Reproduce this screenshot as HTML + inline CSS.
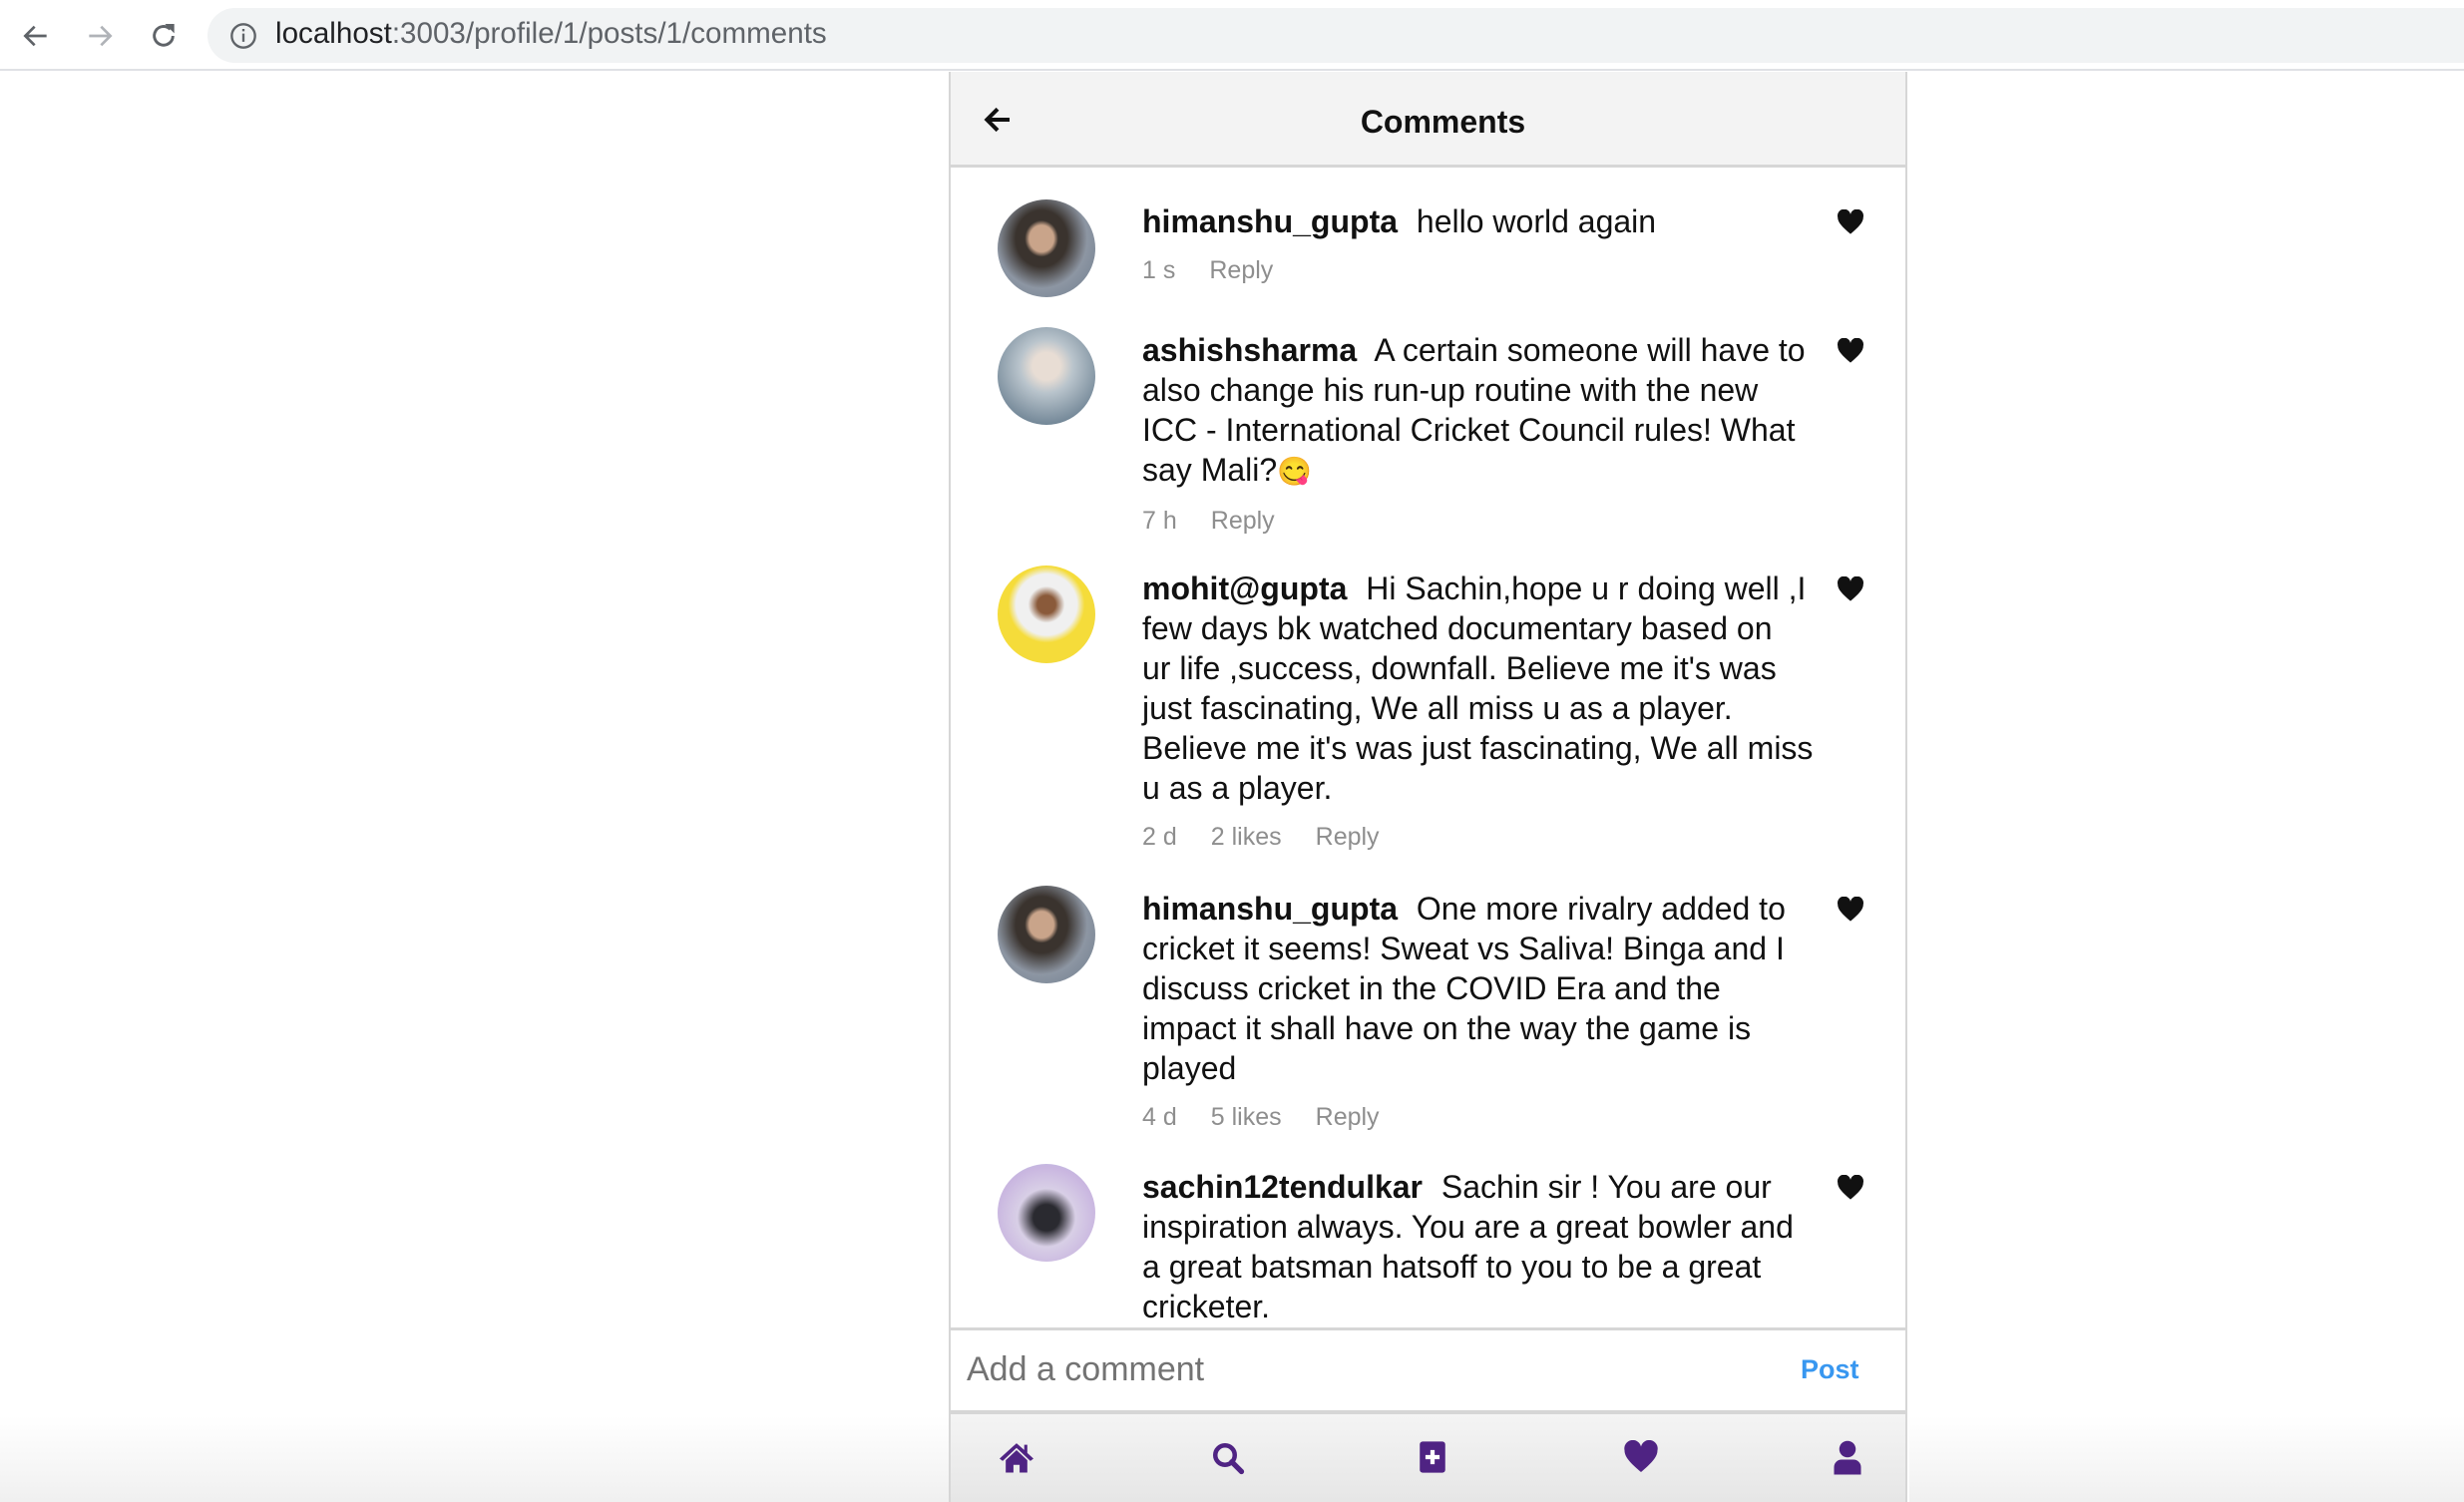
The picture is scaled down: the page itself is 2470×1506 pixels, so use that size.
<!DOCTYPE html>
<html><head><meta charset="utf-8"><style>
*{margin:0;padding:0;box-sizing:border-box}
body{width:2470px;height:1506px;overflow:hidden;background:#fff;font-family:"Liberation Sans",Helvetica,Arial,sans-serif;position:relative}
.bar{position:absolute;left:0;top:0;width:2470px;height:71px;background:#fff;border-bottom:2px solid #dfe1e5}
.pill{position:absolute;left:208px;top:8px;width:2300px;height:55px;border-radius:28px;background:#f1f3f4}
.url{position:absolute;left:276px;top:17px;font-size:29.6px;color:#5f6368}
.url b{font-weight:normal;color:#202124}
.panel{position:absolute;left:951px;top:72px;width:961px;height:1434px;border-left:2px solid #d6d6d6;border-right:2px solid #d6d6d6;background:#fff}
.hdr{position:absolute;left:0;top:0;width:100%;height:96px;background:#f3f3f3;border-bottom:3px solid #d6d6d6}
.hdr .t{position:absolute;left:15px;width:100%;text-align:center;top:32px;font-size:32px;font-weight:bold;color:#111}
.c{position:absolute;left:0;width:100%;height:10px}
.av{position:absolute;left:47px;width:98px;height:98px;border-radius:50%}
.tx{position:absolute;left:192px;font-size:32px;line-height:40px;color:#111;white-space:nowrap}
.tx b{margin-right:10px}
.meta{font-size:25px;color:#8e8e8e;line-height:40px;margin-top:9px}
.meta span{margin-right:34px}
.hw{position:absolute;left:888px;width:28px;height:26px}
.hw svg{display:block;width:28px;height:26px}
.inp{position:absolute;left:0;top:1259px;width:100%;height:83px;border-top:3px solid #d6d6d6}
.inp .p{position:absolute;left:16px;top:20px;font-size:34px;color:#737373}
.inp .post{position:absolute;left:852px;top:24px;font-size:27px;font-weight:bold;color:#3897f0}
.nav{position:absolute;left:0;top:1342px;width:100%;height:92px;border-top:4px solid #d6d6d6;background:linear-gradient(#f4f4f4,#e6e6e6)}
.nav svg{position:absolute;top:26px}
.shade{position:absolute;left:0;top:1420px;width:951px;height:86px;background:linear-gradient(rgba(255,255,255,0),rgba(230,230,230,.6))}
.shade2{position:absolute;left:1914px;top:1420px;width:556px;height:86px;background:linear-gradient(rgba(255,255,255,0),rgba(230,230,230,.6))}
</style></head><body>
<div class="bar">
<svg style="position:absolute;left:20px;top:20px" width="32" height="32" viewBox="0 0 24 24"><path d="M20 12H5M11 5l-7 7 7 7" fill="none" stroke="#5f6368" stroke-width="2"/></svg>
<svg style="position:absolute;left:84px;top:20px" width="32" height="32" viewBox="0 0 24 24"><path d="M4 12h15M13 5l7 7-7 7" fill="none" stroke="#b0b3b8" stroke-width="2"/></svg>
<svg style="position:absolute;left:148px;top:20px" width="32" height="32" viewBox="0 0 24 24"><path d="M19 12a7 7 0 1 1-2-5" fill="none" stroke="#5f6368" stroke-width="2.2"/><path d="M13 3h7v7z" fill="#5f6368"/></svg>
<div class="pill"></div>
<svg style="position:absolute;left:230px;top:22px" width="28" height="28" viewBox="0 0 24 24"><circle cx="12" cy="12" r="10" fill="none" stroke="#5f6368" stroke-width="2"/><path d="M12 10v7M12 6v2" stroke="#5f6368" stroke-width="2"/></svg>
<div class="url"><b>localhost</b>:3003/profile/1/posts/1/comments</div>
</div>
<div class="panel">
<div class="hdr">
<svg style="position:absolute;left:30px;top:32px" width="34" height="32" viewBox="0 0 24 24"><path d="M21 12H5M12 4l-8 8 8 8" fill="none" stroke="#111" stroke-width="3"/></svg>
<div class="t">Comments</div></div>

<div class="c" style="top:128px">
<div class="av" style="top:0;background:radial-gradient(ellipse at 45% 40%,#c9a48a 0 16%,#3a332e 22% 34%,#8d96a3 60%,#6c7b8c)"></div>
<div class="tx" style="top:2px"><b>himanshu_gupta</b> hello world again<div class="meta"><span>1 s</span>Reply</div></div>
<div class="hw" style="top:10px"><svg viewBox="0 0 24 22"><path d="M12 21C5 15 1 11 1 6.5A5.5 5.5 0 0 1 12 4a5.5 5.5 0 0 1 11 2.5C23 11 19 15 12 21z" fill="#111"/></svg></div>
</div>

<div class="c" style="top:256px">
<div class="av" style="top:0;background:radial-gradient(circle at 50% 40%,#e8ddd4 0 18%,#b9c4cc 35%,#6d8293 80%)"></div>
<div class="tx" style="top:3px"><b>ashishsharma</b> A certain someone will have to<br>also change his run-up routine with the new<br>ICC - International Cricket Council rules! What<br>say Mali?<span style="font-size:28px">😋</span><div class="meta"><span>7 h</span>Reply</div></div>
<div class="hw" style="top:11px"><svg viewBox="0 0 24 22"><path d="M12 21C5 15 1 11 1 6.5A5.5 5.5 0 0 1 12 4a5.5 5.5 0 0 1 11 2.5C23 11 19 15 12 21z" fill="#111"/></svg></div>
</div>

<div class="c" style="top:495px">
<div class="av" style="top:0;background:radial-gradient(circle at 50% 40%,#8a5a3a 0 12%,#f0f0f0 24% 40%,#f5dc3a 50%)"></div>
<div class="tx" style="top:3px"><b>mohit@gupta</b> Hi Sachin,hope u r doing well ,I<br>few days bk watched documentary based on<br>ur life ,success, downfall. Believe me it's was<br>just fascinating, We all miss u as a player.<br>Believe me it's was just fascinating, We all miss<br>u as a player.<div class="meta"><span>2 d</span><span>2 likes</span>Reply</div></div>
<div class="hw" style="top:11px"><svg viewBox="0 0 24 22"><path d="M12 21C5 15 1 11 1 6.5A5.5 5.5 0 0 1 12 4a5.5 5.5 0 0 1 11 2.5C23 11 19 15 12 21z" fill="#111"/></svg></div>
</div>

<div class="c" style="top:816px">
<div class="av" style="top:0;background:radial-gradient(ellipse at 45% 40%,#c9a48a 0 16%,#3a332e 22% 34%,#8d96a3 60%,#6c7b8c)"></div>
<div class="tx" style="top:3px"><b>himanshu_gupta</b> One more rivalry added to<br>cricket it seems! Sweat vs Saliva! Binga and I<br>discuss cricket in the COVID Era and the<br>impact it shall have on the way the game is<br>played<div class="meta"><span>4 d</span><span>5 likes</span>Reply</div></div>
<div class="hw" style="top:11px"><svg viewBox="0 0 24 22"><path d="M12 21C5 15 1 11 1 6.5A5.5 5.5 0 0 1 12 4a5.5 5.5 0 0 1 11 2.5C23 11 19 15 12 21z" fill="#111"/></svg></div>
</div>

<div class="c" style="top:1095px">
<div class="av" style="top:0;background:radial-gradient(circle at 50% 55%,#2a2a30 0 18%,#d8cfe6 40%,#c9b6e0 70%,#a9c7e8)"></div>
<div class="tx" style="top:3px"><b>sachin12tendulkar</b> Sachin sir ! You are our<br>inspiration always. You are a great bowler and<br>a great batsman hatsoff to you to be a great<br>cricketer.</div>
<div class="hw" style="top:11px"><svg viewBox="0 0 24 22"><path d="M12 21C5 15 1 11 1 6.5A5.5 5.5 0 0 1 12 4a5.5 5.5 0 0 1 11 2.5C23 11 19 15 12 21z" fill="#111"/></svg></div>
</div>

<div class="inp"><div class="p">Add a comment</div><div class="post">Post</div></div>
<div class="nav">
<svg style="left:47px" width="38" height="34" viewBox="0 0 24 22"><path d="M12 2L1 12l2 1.5L12 5l9 8.5L23 12l-4-3.7V3h-2v3.4z" fill="#4f2383"/><path d="M5 13l7-6.5 7 6.5v8h-5v-5h-4v5H5z" fill="#4f2383"/></svg>
<svg style="left:260px" width="36" height="36" viewBox="0 0 24 24"><circle cx="10" cy="10" r="6.5" fill="none" stroke="#4f2383" stroke-width="3"/><path d="M14.5 14.5L21 21" stroke="#4f2383" stroke-width="3.5" stroke-linecap="round"/></svg>
<svg style="left:468px" width="30" height="34" viewBox="0 0 20 24"><rect x="1" y="1" width="18" height="22" rx="2" fill="#4f2383"/><path d="M10 7v10M5 12h10" stroke="#fff" stroke-width="3"/></svg>
<svg style="left:674px" width="36" height="34" viewBox="0 0 24 22"><path d="M12 21C5 15 1 11 1 6.5A5.5 5.5 0 0 1 12 4a5.5 5.5 0 0 1 11 2.5C23 11 19 15 12 21z" fill="#4f2383"/></svg>
<svg style="left:884px" width="30" height="36" viewBox="0 0 20 24"><circle cx="10" cy="6" r="5.5" fill="#4f2383"/><path d="M1 23v-5a5 5 0 0 1 5-5h8a5 5 0 0 1 5 5v5z" fill="#4f2383"/></svg>
</div>
</div>
<div class="shade"></div><div class="shade2"></div>
</body></html>
